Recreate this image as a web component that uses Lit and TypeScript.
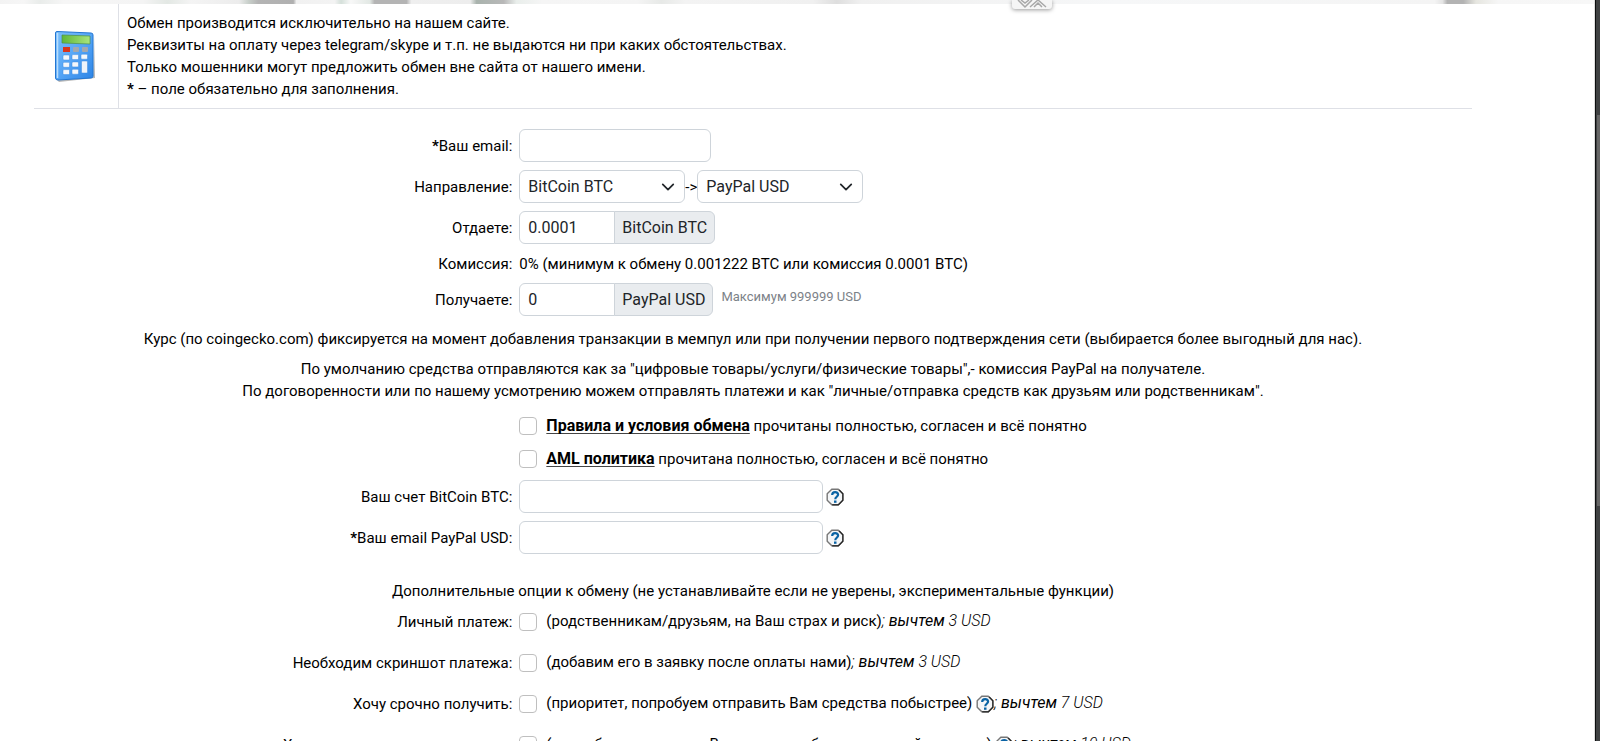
import { LitElement, html, css, svg, nothing } from "lit";
import { customElement, property, state } from "lit/decorators.js";

@customElement("help-icon")
class HelpIcon extends LitElement {
  static styles = css`
    :host { display: inline-block; width: 18px; height: 18px; vertical-align: -5px; }
    button { all: unset; display: block; width: 18px; height: 18px; cursor: help; }
    svg { display: block; }
  `;
  render() {
    return html`<button type="button" aria-label="Подсказка">
      <svg width="18" height="18" viewBox="0 0 18 18" fill="none">
        <path d="M5.8 1.2h6.4l4.6 4.6v6.4l-4.6 4.6H5.8l-4.6-4.6V5.8z" fill="#f4f6f8" stroke="#777" stroke-width="1.4"/>
        <path d="M13.2 1.9 16.9 5.8v6.4l-4.5 4.6H6.2" stroke="#222" stroke-width="1.2"/>
        <path d="M6.2 6.9c0-3.6 5.9-3.6 5.9-.3 0 2.1-2.8 2.2-2.8 4.6" stroke="#0a63a4" stroke-width="2.2"/>
        <rect x="8" y="12.5" width="2.5" height="2.3" fill="#0a63a4"/>
      </svg>
    </button>`;
  }
}

interface Option {
  id: string;
  label: string;
  note: string;
  help: boolean;
  fee: string;
}

const OPTIONS: Option[] = [
  { id: "personal", label: "Личный платеж:", note: "(родственникам/друзьям, на Ваш страх и риск)", help: false, fee: "3 USD" },
  { id: "screenshot", label: "Необходим скриншот платежа:", note: "(добавим его в заявку после оплаты нами)", help: false, fee: "3 USD" },
  { id: "urgent", label: "Хочу срочно получить:", note: "(приоритет, попробуем отправить Вам средства побыстрее)", help: true, fee: "7 USD" },
  { id: "single", label: "Хочу получить одним платежом:", note: "(попробуем отправить Вам средства без разделений на части)", help: true, fee: "10 USD" },
];

@customElement("app-root")
class AppRoot extends LitElement {
  @property() give = "BitCoin BTC";
  @property() take = "PayPal USD";
  @state() private amount = "0.0001";

  static styles = css`
    :host {
      display: flex;
      height: 100vh;
      overflow: hidden;
      background: #fff;
      color: #000;
      font: 400 15px/22px Roboto, "Noto Sans", sans-serif;
    }
    * { box-sizing: border-box; }
    .page { flex: 1; min-width: 0; overflow: hidden; border-right: 1px solid #ddd; }
    .track { width: 5px; border-left: 1px solid #0c0e0f; background: #3f4142; padding-top: 115px; }
    .thumb { height: 391px; margin-left: 1px; background: #666; }
    .banner {
      position: relative;
      height: 4px;
      background: linear-gradient(90deg, #f3f3f3 0, #f6f6f6 1.5%, #e9ecea 2.5%, #f6f6f6 4%, #f4f4f4 9%, #e3e8e4 10.5%, #f4f4f4 12%,
        #ececec 15%, #c8cfca 15.6%, #b4b4b4 16.2%, #b0b0b0 18.4%, #f1f1f1 18.6%, #f3f3f3 21%, #d5e0da 21.4%, #f8f8f8 22%,
        #e2e8e4 23.2%, #b4b4b4 23.5%, #b4b4b4 25.5%, #efefef 25.8%, #ededed 29.5%, #a9b3ad 29.9%, #b8b8b8 31.6%, #e9eeeb 32.4%,
        #f5f5f5 34%, #f4f4f4 40%, #e7e9e7 41.5%, #f3f3f3 43%, #f0f0f0 51%, #dedede 52.5%, #f0f0f0 54%, #f6f7f8 70%,
        #f4f4f4 90%, #e4e4e4 90.5%, #b3b3b3 90.8%, #b3b3b3 91.8%, #e6e6e0 92.6%, #f6f6f6 94%, #f7f7f7 100%);
    }
    .tab {
      all: unset;
      position: absolute;
      left: 63.5%;
      top: 0;
      height: 9px;
      width: 40px;
      overflow: hidden;
      background: #f5f5f5;
      border-radius: 0 0 3px 3px;
      box-shadow: 0 1px 4px rgba(0, 0, 0, .4);
    }
    .tab svg { display: block; margin: 0 auto; }
    .content { margin-left: 34px; margin-right: 122px; }
    .notice { display: flex; border-bottom: 1px solid #dee0e6; }
    .pic { width: 85px; padding: 26px 0 0 19px; border-right: 1px solid #dee0e6; }
    .pic svg { display: block; }
    .notice p { margin: 0; padding: 8px; }
    form { padding-top: 20px; display: flex; flex-direction: column; gap: 8px; }
    .row { display: grid; grid-template-columns: 1fr 2fr; align-items: center; }
    .row > :first-child { text-align: right; padding-right: 1px; }
    .row > .cell:only-child { grid-column: 2; text-align: left; }
    .cell { display: flex; align-items: center; min-height: 23px; padding-left: 6px; }
    .field {
      font: inherit;
      font-size: 16px;
      line-height: 21px;
      height: 33px;
      color: #212529;
      background: #fff;
      border: 1px solid #ced4da;
      border-radius: 6px;
      padding: 5px 8px;
      margin: 0;
    }
    .email { width: 192px; }
    .wide { width: 304px; margin-right: 3px; }
    .amount { width: 96px; border-radius: 6px 0 0 6px; }
    .select { position: relative; display: flex; align-items: center; }
    .select select { width: 166px; appearance: none; }
    .select svg { position: absolute; right: 10px; pointer-events: none; }
    .addon { background: #e9ecef; border-radius: 0 6px 6px 0; margin-left: -1px; padding: 5px 7px; }
    .max { font-size: 13px; color: #7c8288; padding: 0 0 6px 8px; }
    .center { margin: 0; text-align: center; }
    .terms { display: flex; flex-direction: column; gap: 10px; padding: 4px 0 2px; }
    .check {
      appearance: none;
      flex: none;
      width: 18px;
      height: 18px;
      margin: 0 9px 0 0;
      border: 1px solid #bfbfbf;
      border-radius: 4px;
      background: #fff;
    }
    .check:checked { background: #0d6efd; }
    a { color: inherit; font-size: 16px; font-weight: 700; text-decoration: underline 1px #444; text-underline-offset: 2px; text-decoration-skip-ink: none; }
    .rate { padding-top: 4px; }
    .extra { padding-top: 18px; }
    .option .cell { min-height: 33px; }
    .option .text { padding-bottom: 2px; }
    .options { display: flex; flex-direction: column; gap: 8px; margin-top: -5px; }
    .fee { font-size: 16px; font-style: italic; font-weight: 300; }
    .fee em { font-weight: 400; }
  `;

  private select(id: string, label: string, value: string, other: string) {
    return html`<span class="select">
      <select class="field" id=${id} aria-label=${label}>
        <option selected>${value}</option>
        <option>${other}</option>
      </select>
      <svg width="14" height="14" viewBox="0 0 16 16" fill="none" stroke="#212529" stroke-width="2" stroke-linecap="round" stroke-linejoin="round"><path d="m2 5 6 6 6-6"/></svg>
    </span>`;
  }

  private option(o: Option) {
    return html`<div class="row option">
      <label for=${o.id}>${o.label}</label>
      <div class="cell">
        <input class="check" type="checkbox" id=${o.id}>
        <span class="text">${o.note}${o.help ? html` <help-icon></help-icon>` : nothing}<span class="fee">; <em>вычтем</em> ${o.fee}</span></span>
      </div>
    </div>`;
  }

  private calculator() {
    const keys = [0, 1, 2].flatMap((r) => [0, 1, 2].map((c) => ({ r, c }))).filter(({ r, c }) => c < 2 || r === 0);
    return svg`
      <defs>
        <linearGradient id="body" x1="0" y1="0" x2="1" y2="1"><stop offset="0" stop-color="#7cc0fb"/><stop offset=".5" stop-color="#55a5f6"/><stop offset="1" stop-color="#2c84e6"/></linearGradient>
        <linearGradient id="lcd" x1="0" y1="0" x2="1" y2="0"><stop offset="0" stop-color="#5fb838"/><stop offset="1" stop-color="#a9e57c"/></linearGradient>
      </defs>
      <path d="M4 50 40 47l1-42 1 43-36 4z" fill="#888" opacity=".6"/>
      <path d="M4 1.500 38 3q2 0 2 2v41q0 2-2 2L5 50q-2.500 0-2.500-2V3q0-1.500 1.500-1.500z" fill="url(#body)" stroke="#2376d2"/>
      <path d="M4.500 3v45" stroke="#b9defd" stroke-width="1.500"/>
      <path d="m9 5 28 1v8L9 13z" fill="url(#lcd)" stroke="#4f8f48" stroke-width=".7"/>
      <rect x="10" y="17" width="7" height="5" fill="#d9361c"/>
      <rect x="20" y="17" width="6" height="5" rx="1" fill="#a2a8b0"/>
      <rect x="29" y="17" width="6" height="5" rx="1" fill="#a2a8b0"/>
      ${keys.map(({ r, c }) => svg`<rect x=${10 + c * 9} y=${25 + r * 7.3 - c * 0.4} width="6.500" height="5" rx="1" fill="#f4f7fb" stroke="#3c8be0" stroke-width=".5"/>`)}
      <rect x="28.500" y="31" width="6" height="12" rx="1" fill="#eef3fa" stroke="#3c8be0" stroke-width=".5"/>`;
  }

  render() {
    return html`
      <div class="page">
        <div class="banner">
          <button class="tab" type="button" aria-label="Свернуть">
            <svg width="30" height="9" viewBox="0 0 30 9" fill="none" stroke="#a8a8a8" stroke-width="1.500"><path d="m1 0 7 7 7-7M4 0l4 3 4-3M13 7l8-7 8 7M17 7l4-4 4 4"/></svg>
          </button>
        </div>
        <div class="content">
          <div class="notice">
            <div class="pic"><svg width="44" height="54" viewBox="0 0 44 54">${this.calculator()}</svg></div>
            <p>
              Обмен производится исключительно на нашем сайте.<br>
              Реквизиты на оплату через telegram/skype и т.п. не выдаются ни при каких обстоятельствах.<br>
              Только мошенники могут предложить обмен вне сайта от нашего имени.<br>
              <b>*</b> – поле обязательно для заполнения.
            </p>
          </div>
          <form>
            <div class="row">
              <label for="email"><b>*</b>Ваш email:</label>
              <div class="cell"><input class="field email" id="email" type="email"></div>
            </div>
            <div class="row">
              <label for="from">Направление:</label>
              <div class="cell">${this.select("from", "Отдаете", this.give, this.take)}-&gt;${this.select("to", "Получаете", this.take, this.give)}</div>
            </div>
            <div class="row">
              <label for="give">Отдаете:</label>
              <div class="cell">
                <input class="field amount" id="give" .value=${this.amount}>
                <span class="field addon">${this.give}</span>
              </div>
            </div>
            <div class="row">
              <span>Комиссия:</span>
              <div class="cell">0% (минимум к обмену 0.001222 BTC или комиссия 0.0001 BTC)</div>
            </div>
            <div class="row">
              <label for="take">Получаете:</label>
              <div class="cell">
                <input class="field amount" id="take" value="0">
                <span class="field addon">${this.take}</span>
                <span class="max">Максимум 999999 USD</span>
              </div>
            </div>
            <p class="center rate">Курс (по coingecko.com) фиксируется на момент добавления транзакции в мемпул или при получении первого подтверждения сети (выбирается более выгодный для нас).</p>
            <p class="center">
              По умолчанию средства отправляются как за "цифровые товары/услуги/физические товары",- комиссия PayPal на получателе.<br>
              По договоренности или по нашему усмотрению можем отправлять платежи и как "личные/отправка средств как друзьям или родственникам".
            </p>
            <div class="terms">
              <div class="row"><div class="cell">
                <input class="check" type="checkbox" id="rules">
                <label for="rules"><a href="#rules">Правила и условия обмена</a> прочитаны полностью, согласен и всё понятно</label>
              </div></div>
              <div class="row"><div class="cell">
                <input class="check" type="checkbox" id="aml">
                <label for="aml"><a href="#aml">AML политика</a> прочитана полностью, согласен и всё понятно</label>
              </div></div>
            </div>
            <div class="row">
              <label for="account">Ваш счет ${this.give}:</label>
              <div class="cell"><input class="field wide" id="account"><help-icon></help-icon></div>
            </div>
            <div class="row">
              <label for="payee"><b>*</b>Ваш email ${this.take}:</label>
              <div class="cell"><input class="field wide" id="payee"><help-icon></help-icon></div>
            </div>
            <p class="center extra">Дополнительные опции к обмену (не устанавливайте если не уверены, экспериментальные функции)</p>
            <div class="options">${OPTIONS.map((o) => this.option(o))}</div>
          </form>
        </div>
      </div>
      <div class="track"><div class="thumb"></div></div>
    `;
  }
}
